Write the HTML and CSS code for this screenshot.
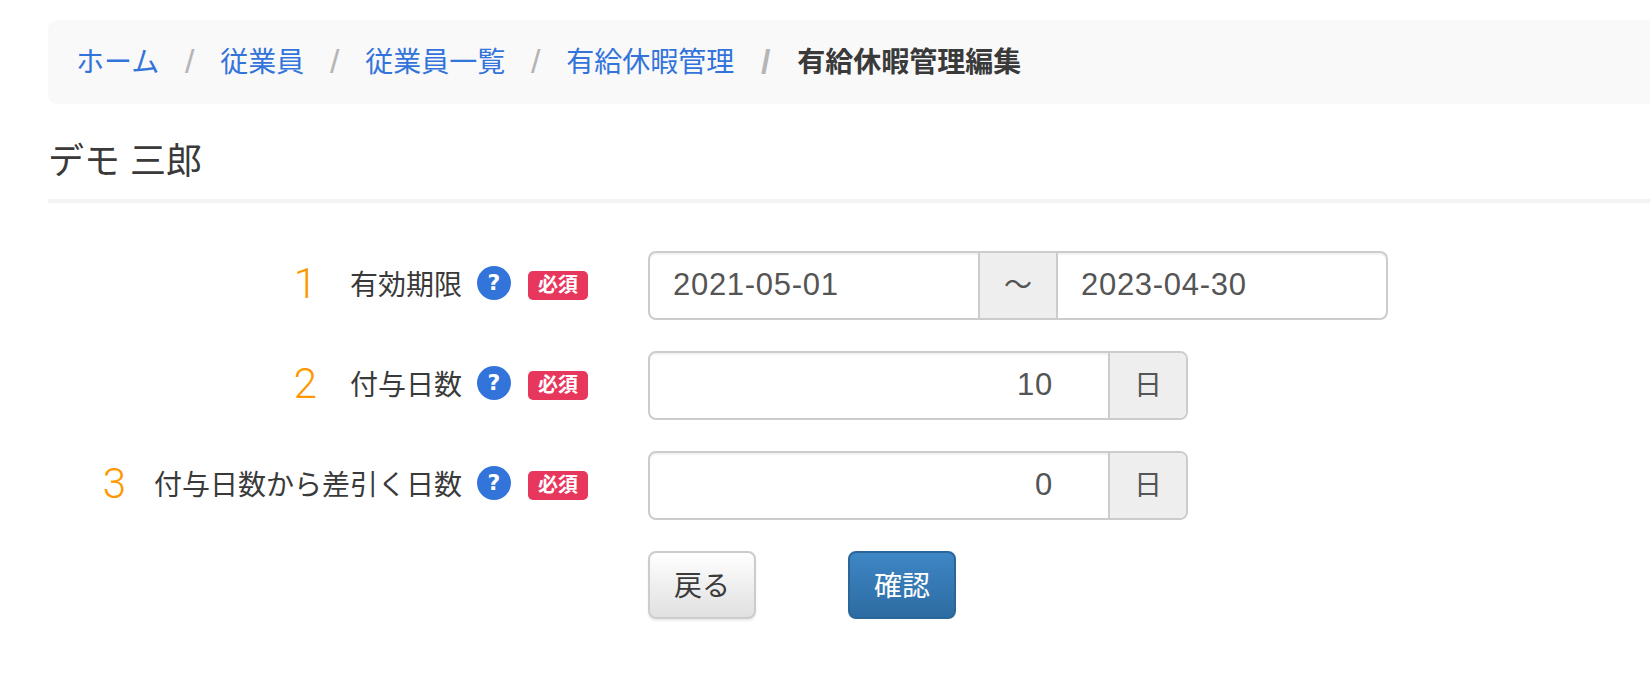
FILE: index.html
```html
<!DOCTYPE html>
<html lang="ja">
<head>
  <meta charset="UTF-8">
  <title>有給休暇管理編集</title>
  <link rel="stylesheet" href="styles.css">
</head>
<body>
  <div class="page">
    <!-- Breadcrumb -->
    <ol class="breadcrumb">
      <li><a href="#">ホーム</a></li>
      <li class="sep">/</li>
      <li><a href="#">従業員</a></li>
      <li class="sep">/</li>
      <li><a href="#">従業員一覧</a></li>
      <li class="sep">/</li>
      <li><a href="#">有給休暇管理</a></li>
      <li class="sep sep-last">/</li>
      <li class="active">有給休暇管理編集</li>
    </ol>

    <h3 class="page-title">デモ 三郎</h3>

    <!-- Form -->
    <form class="form">
      <div class="form-row">
        <div class="form-label">
          <span class="num num-1">1</span>
          <span class="label-text">有効期限</span>
          <span class="help">?</span>
          <span class="required">必須</span>
        </div>
        <div class="input-group group-date">
          <div class="input-box">2021-05-01</div>
          <div class="addon addon-date">〜</div>
          <div class="input-box">2023-04-30</div>
        </div>
      </div>

      <div class="form-row">
        <div class="form-label">
          <span class="num num-2">2</span>
          <span class="label-text">付与日数</span>
          <span class="help">?</span>
          <span class="required">必須</span>
        </div>
        <div class="input-group group-days">
          <div class="input-box text-right">10</div>
          <div class="addon addon-days">日</div>
        </div>
      </div>

      <div class="form-row">
        <div class="form-label">
          <span class="num num-3">3</span>
          <span class="label-text">付与日数から差引く日数</span>
          <span class="help">?</span>
          <span class="required">必須</span>
        </div>
        <div class="input-group group-days">
          <div class="input-box text-right">0</div>
          <div class="addon addon-days">日</div>
        </div>
      </div>

      <div class="form-actions">
        <button type="button" class="btn btn-default">戻る</button>
        <button type="button" class="btn btn-primary">確認</button>
      </div>
    </form>
  </div>
</body>
</html>
```

FILE: styles.css
```css
/* General Reset */
* {
  margin: 0;
  padding: 0;
  box-sizing: border-box;
}

html, body {
  height: 100%;
  overflow: hidden;
}

body {
  font-family: "Liberation Sans", "Noto Sans CJK JP", sans-serif;
  font-size: 28px;
  color: #3a3a3a;
  background-color: #fff;
}

.page {
  padding: 20px 0 0 48px;
}

/* Breadcrumb */
.breadcrumb {
  display: flex;
  align-items: center;
  height: 84px;
  padding: 0 0 4px 28px;
  list-style: none;
  background-color: #f9f9f9;
  border-radius: 9px 0 0 9px;
}

.breadcrumb a {
  color: #3374db;
  text-decoration: none;
}

.breadcrumb .sep {
  width: 61px;
  padding-top: 3px;
  text-align: center;
  color: #b5b5b5;
  font-size: 34px;
}

.breadcrumb .sep-last {
  width: 63px;
  font-weight: bold;
}

.breadcrumb .active {
  font-weight: bold;
}

.page-title {
  height: 99px;
  padding-top: 32px;
  font-size: 36px;
  line-height: 52px;
  font-weight: normal;
  border-bottom: 4px solid #f3f3f3;
}

/* Form */
.form {
  padding-top: 48px;
}

.form-row {
  display: flex;
  align-items: center;
  height: 69px;
  margin-bottom: 31px;
}

.form-label {
  display: flex;
  justify-content: flex-end;
  align-items: center;
  width: 540px;
  margin-right: 60px;
}

.num {
  font-family: Roboto, sans-serif;
  font-weight: 300;
  font-size: 42px;
  line-height: 1;
  color: #ff9800;
}

.num-1 {
  margin: -3px 33px 0 0;
}

.num-2 {
  margin: -3px 33px 0 0;
}

.num-3 {
  margin: -3px 28px 0 0;
}

.label-text {
  margin-top: -6px;
}

.help {
  display: flex;
  justify-content: center;
  align-items: center;
  width: 34px;
  height: 34px;
  margin: -6px 0 0 15px;
  border-radius: 50%;
  background-color: #3374db;
  color: #fff;
  font-family: "DejaVu Sans", sans-serif;
  font-weight: bold;
  font-size: 22px;
}

.required {
  width: 60px;
  height: 29px;
  margin: 0 0 0 17px;
  border-radius: 5px;
  background-color: #e7375c;
  color: #fff;
  font-weight: bold;
  font-size: 20px;
  line-height: 29px;
  text-align: center;
}

.input-group {
  display: flex;
  height: 69px;
  border: 2px solid #ccc;
  border-radius: 8px;
  box-shadow: inset 0 2px 1px rgba(0, 0, 0, 0.05);
  overflow: hidden;
  color: #555;
}

.group-date {
  width: 740px;
}

.group-days {
  width: 540px;
}

.input-box {
  flex: 1;
  padding: 0 23px;
  line-height: 63px;
  font-size: 31px;
  letter-spacing: 0.7px;
}

.text-right {
  padding-right: 55px;
  text-align: right;
}

.addon {
  text-align: center;
  line-height: 65px;
  background-color: #eee;
  border-left: 2px solid #ccc;
}

.addon-date {
  width: 80px;
  border-right: 2px solid #ccc;
}

.addon-days {
  width: 78px;
}

.form-actions {
  display: flex;
  gap: 92px;
  padding-left: 600px;
}

.btn {
  width: 108px;
  height: 68px;
  padding-bottom: 3px;
  font-family: inherit;
  font-size: 28px;
  border-radius: 8px;
  cursor: pointer;
}

.btn-default {
  color: #3a3a3a;
  background: linear-gradient(#fff, #e0e0e0);
  border: 2px solid #ccc;
  box-shadow: 0 2px 2px rgba(0, 0, 0, 0.08);
}

.btn-primary {
  color: #fff;
  background: linear-gradient(#3e86c5, #2d6ca2);
  border: 2px solid #2b669a;
}
```
